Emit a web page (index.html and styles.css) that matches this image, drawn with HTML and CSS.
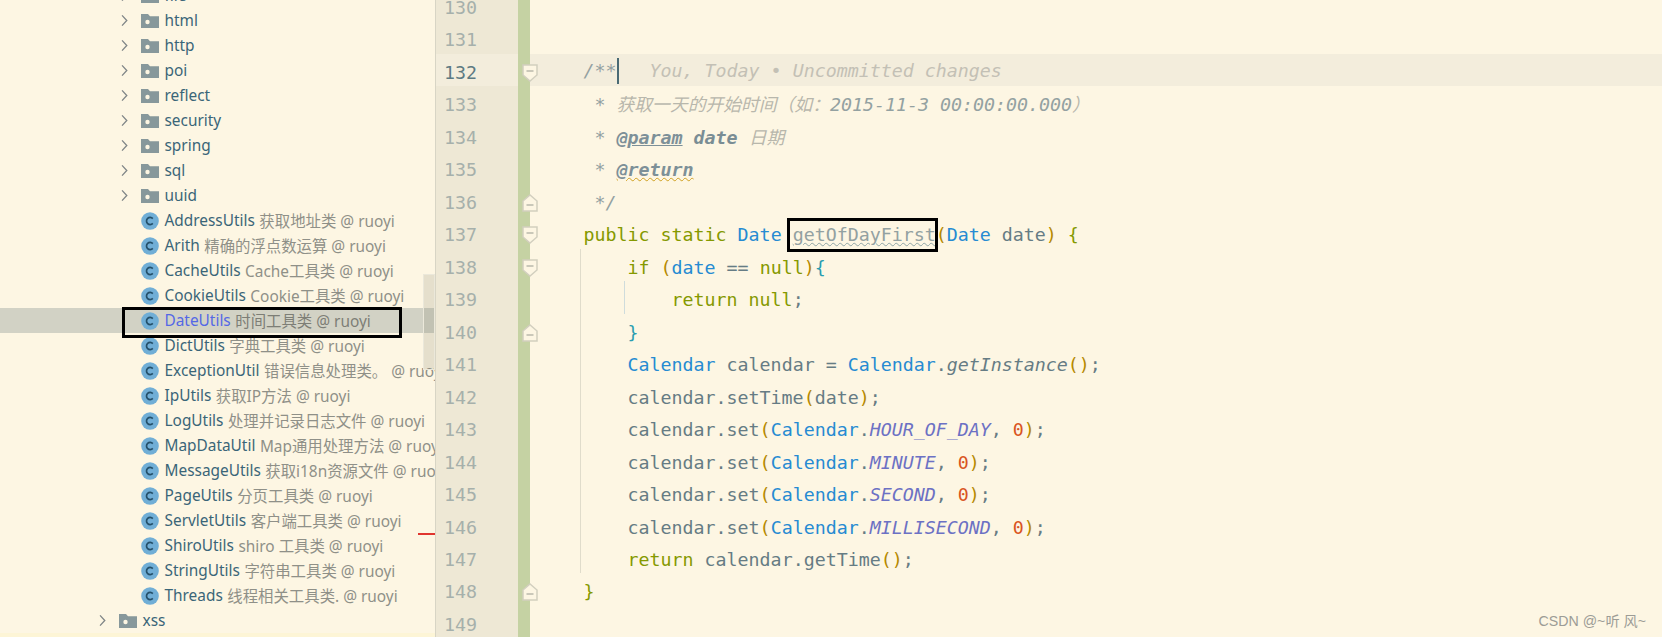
FILE: index.html
```html
<!DOCTYPE html>
<html lang="zh">
<head>
<meta charset="utf-8">
<title>DateUtils</title>
<link rel="stylesheet" href="styles.css">
</head>
<body>
<svg class="defs" width="0" height="0" aria-hidden="true">
  <defs>
    <symbol id="chev" viewBox="0 0 8 14"><path d="M1.2 1.2 L6.6 7 L1.2 12.8" fill="none" stroke="#7f8587" stroke-width="1.5"/></symbol>
    <symbol id="folder" viewBox="0 0 18 14"><path d="M0 0 H7 L9 2.2 H18 V14 H0 Z" fill="#87989b"/><circle cx="6.5" cy="8" r="2.2" fill="#fdf6e3"/></symbol>
    <symbol id="cls" viewBox="0 0 18 18"><circle cx="9" cy="9" r="8.8" fill="#70aed6"/><path d="M11.8 6.6 A3.6 3.6 0 1 0 11.8 11.4" fill="none" stroke="#24506a" stroke-width="1.7"/></symbol>
    <symbol id="fold-open" viewBox="0 0 16 18"><path d="M1 1 H15 V11 L8 17 L1 11 Z" fill="#fdf6e3" stroke="#d2cfbf" stroke-width="1.5"/><path d="M4.5 7 H11.5" stroke="#a9aa9d" stroke-width="1.2"/></symbol>
    <symbol id="fold-close" viewBox="0 0 16 18"><path d="M1 17 H15 V7 L8 1 L1 7 Z" fill="#fdf6e3" stroke="#d2cfbf" stroke-width="1.5"/><path d="M4.5 11 H11.5" stroke="#a9aa9d" stroke-width="1.2"/></symbol>
  </defs>
</svg>
<div class="app">
  <aside class="panel">
    <div class="tree">
      <div class="row d1"><svg class="chev"><use href="#chev"/></svg><svg class="folder"><use href="#folder"/></svg><span class="name">file</span></div>
      <div class="row d1"><svg class="chev"><use href="#chev"/></svg><svg class="folder"><use href="#folder"/></svg><span class="name">html</span></div>
      <div class="row d1"><svg class="chev"><use href="#chev"/></svg><svg class="folder"><use href="#folder"/></svg><span class="name">http</span></div>
      <div class="row d1"><svg class="chev"><use href="#chev"/></svg><svg class="folder"><use href="#folder"/></svg><span class="name">poi</span></div>
      <div class="row d1"><svg class="chev"><use href="#chev"/></svg><svg class="folder"><use href="#folder"/></svg><span class="name">reflect</span></div>
      <div class="row d1"><svg class="chev"><use href="#chev"/></svg><svg class="folder"><use href="#folder"/></svg><span class="name">security</span></div>
      <div class="row d1"><svg class="chev"><use href="#chev"/></svg><svg class="folder"><use href="#folder"/></svg><span class="name">spring</span></div>
      <div class="row d1"><svg class="chev"><use href="#chev"/></svg><svg class="folder"><use href="#folder"/></svg><span class="name">sql</span></div>
      <div class="row d1"><svg class="chev"><use href="#chev"/></svg><svg class="folder"><use href="#folder"/></svg><span class="name">uuid</span></div>
      <div class="row d1 leaf"><svg class="cls"><use href="#cls"/></svg><span class="name">AddressUtils</span><span class="note">获取地址类 @ ruoyi</span></div>
      <div class="row d1 leaf"><svg class="cls"><use href="#cls"/></svg><span class="name">Arith</span><span class="note">精确的浮点数运算 @ ruoyi</span></div>
      <div class="row d1 leaf"><svg class="cls"><use href="#cls"/></svg><span class="name">CacheUtils</span><span class="note">Cache工具类 @ ruoyi</span></div>
      <div class="row d1 leaf"><svg class="cls"><use href="#cls"/></svg><span class="name">CookieUtils</span><span class="note">Cookie工具类 @ ruoyi</span></div>
      <div class="row d1 leaf selected"><svg class="cls"><use href="#cls"/></svg><span class="name">DateUtils</span><span class="note">时间工具类 @ ruoyi</span><span class="mark-box"></span></div>
      <div class="row d1 leaf"><svg class="cls"><use href="#cls"/></svg><span class="name">DictUtils</span><span class="note">字典工具类 @ ruoyi</span></div>
      <div class="row d1 leaf"><svg class="cls"><use href="#cls"/></svg><span class="name">ExceptionUtil</span><span class="note">错误信息处理类。 @ ruoyi</span></div>
      <div class="row d1 leaf"><svg class="cls"><use href="#cls"/></svg><span class="name">IpUtils</span><span class="note">获取IP方法 @ ruoyi</span></div>
      <div class="row d1 leaf"><svg class="cls"><use href="#cls"/></svg><span class="name">LogUtils</span><span class="note">处理并记录日志文件 @ ruoyi</span></div>
      <div class="row d1 leaf"><svg class="cls"><use href="#cls"/></svg><span class="name">MapDataUtil</span><span class="note">Map通用处理方法 @ ruoyi</span></div>
      <div class="row d1 leaf"><svg class="cls"><use href="#cls"/></svg><span class="name">MessageUtils</span><span class="note">获取i18n资源文件 @ ruoyi</span></div>
      <div class="row d1 leaf"><svg class="cls"><use href="#cls"/></svg><span class="name">PageUtils</span><span class="note">分页工具类 @ ruoyi</span></div>
      <div class="row d1 leaf"><svg class="cls"><use href="#cls"/></svg><span class="name">ServletUtils</span><span class="note">客户端工具类 @ ruoyi</span></div>
      <div class="row d1 leaf"><svg class="cls"><use href="#cls"/></svg><span class="name">ShiroUtils</span><span class="note">shiro 工具类 @ ruoyi</span></div>
      <div class="row d1 leaf"><svg class="cls"><use href="#cls"/></svg><span class="name">StringUtils</span><span class="note">字符串工具类 @ ruoyi</span></div>
      <div class="row d1 leaf"><svg class="cls"><use href="#cls"/></svg><span class="name">Threads</span><span class="note">线程相关工具类. @ ruoyi</span></div>
      <div class="row d0"><svg class="chev"><use href="#chev"/></svg><svg class="folder"><use href="#folder"/></svg><span class="name">xss</span></div>
      <div class="row tail"></div>
    </div>
    <div class="scrollbar"></div>
    <div class="error-mark"></div>
  </aside>
  <main class="editor">
    <div class="line"><span class="num">130</span><span class="strip"></span><span class="code"></span></div>
    <div class="line"><span class="num">131</span><span class="strip"></span><span class="code"></span></div>
    <div class="line current"><span class="num">132</span><span class="strip"><svg class="fold"><use href="#fold-open"/></svg></span><span class="code"><span class="c">/**</span><span class="caret"></span><span class="hint">   You, Today • Uncommitted changes</span></span></div>
    <div class="line"><span class="num">133</span><span class="strip"></span><span class="code"><span class="c"> * <span class="zh">获取一天的开始时间（如：</span>2015-11-3 00:00:00.000<span class="zh">）</span></span></span></div>
    <div class="line"><span class="num">134</span><span class="strip"></span><span class="code"><span class="c"> * <span class="tag">@param</span> <span class="pname">date</span> <span class="zh">日期</span></span></span></div>
    <div class="line"><span class="num">135</span><span class="strip"></span><span class="code"><span class="c"> * <span class="tag warn">@return</span></span></span></div>
    <div class="line"><span class="num">136</span><span class="strip"><svg class="fold"><use href="#fold-close"/></svg></span><span class="code"><span class="c"> */</span></span></div>
    <div class="line"><span class="num">137</span><span class="strip"><svg class="fold"><use href="#fold-open"/></svg></span><span class="code"><span class="k">public static</span> <span class="t">Date</span> <span class="boxed"><span class="unused">getOfDayFirst</span></span><span class="p">(</span><span class="t">Date</span> date<span class="p">)</span> <span class="k">{</span></span></div>
    <div class="line guide1"><span class="num">138</span><span class="strip"><svg class="fold"><use href="#fold-open"/></svg></span><span class="code">    <span class="k">if</span> <span class="p">(</span><span class="t">date</span> == <span class="k">null</span><span class="p">)</span><span class="b">{</span></span></div>
    <div class="line guide1 guide2"><span class="num">139</span><span class="strip"></span><span class="code">        <span class="k">return null</span>;</span></div>
    <div class="line guide1"><span class="num">140</span><span class="strip"><svg class="fold"><use href="#fold-close"/></svg></span><span class="code">    <span class="b">}</span></span></div>
    <div class="line guide1"><span class="num">141</span><span class="strip"></span><span class="code">    <span class="t">Calendar</span> calendar = <span class="t">Calendar</span>.<i>getInstance</i><span class="p">()</span>;</span></div>
    <div class="line guide1"><span class="num">142</span><span class="strip"></span><span class="code">    calendar.setTime<span class="p">(</span>date<span class="p">)</span>;</span></div>
    <div class="line guide1"><span class="num">143</span><span class="strip"></span><span class="code">    calendar.set<span class="p">(</span><span class="t">Calendar</span>.<i class="const">HOUR_OF_DAY</i>, <span class="n">0</span><span class="p">)</span>;</span></div>
    <div class="line guide1"><span class="num">144</span><span class="strip"></span><span class="code">    calendar.set<span class="p">(</span><span class="t">Calendar</span>.<i class="const">MINUTE</i>, <span class="n">0</span><span class="p">)</span>;</span></div>
    <div class="line guide1"><span class="num">145</span><span class="strip"></span><span class="code">    calendar.set<span class="p">(</span><span class="t">Calendar</span>.<i class="const">SECOND</i>, <span class="n">0</span><span class="p">)</span>;</span></div>
    <div class="line guide1"><span class="num">146</span><span class="strip"></span><span class="code">    calendar.set<span class="p">(</span><span class="t">Calendar</span>.<i class="const">MILLISECOND</i>, <span class="n">0</span><span class="p">)</span>;</span></div>
    <div class="line guide1"><span class="num">147</span><span class="strip"></span><span class="code">    <span class="k">return</span> calendar.getTime<span class="p">()</span>;</span></div>
    <div class="line"><span class="num">148</span><span class="strip"><svg class="fold"><use href="#fold-close"/></svg></span><span class="code"><span class="k">}</span></span></div>
    <div class="line"><span class="num">149</span><span class="strip"></span><span class="code"></span></div>
    <div class="watermark">CSDN @~听 风~</div>
  </main>
</div>
</body>
</html>
```

FILE: styles.css
```css
html, body {
  margin: 0;
  height: 100%;
  overflow: hidden;
  background: #fdf6e3;
}

.defs {
  position: absolute;
}

.app {
  display: flex;
  height: 637px;
  overflow: hidden;
}

/* project tree */
.panel {
  position: relative;
  flex: 0 0 435px;
  height: 637px;
  overflow: hidden;
  border-right: 1px solid #d8d5c5;
  font-family: "Noto Sans", "Noto Sans CJK SC", sans-serif;
  font-size: 15.4px;
  color: #3a6578;
}

.tree {
  margin-top: -17px;
}

.row {
  position: relative;
  display: flex;
  align-items: center;
  height: 25px;
  white-space: nowrap;
}

.name,
.note {
  margin-top: 1px;
  margin-bottom: 1px;
}

.d1 { padding-left: 121px; }
.d0 { padding-left: 99px; }
.leaf { padding-left: 141px; }

.chev {
  flex: none;
  width: 7px;
  height: 13px;
  margin-right: 13px;
}

.folder {
  flex: none;
  width: 18px;
  height: 14px;
  margin-right: 5.5px;
}

.cls {
  flex: none;
  width: 18px;
  height: 18px;
  margin-right: 5.5px;
}

.note {
  margin-left: 4.5px;
  color: #8f9088;
}

.selected {
  background: #d2d2c5;
}

.selected .name {
  color: #5468e6;
}

.selected .note {
  color: #7d7e76;
}

.mark-box {
  position: absolute;
  left: 122px;
  top: -1px;
  width: 280px;
  height: 31px;
  box-sizing: border-box;
  border: 3px solid #000;
  z-index: 2;
}

.tail {
  background: #fdf5d6;
}

.scrollbar {
  position: absolute;
  left: 423px;
  top: 274px;
  width: 12px;
  height: 96px;
  box-sizing: border-box;
  border: 1px solid #ebe8da;
  background: rgba(120, 120, 100, 0.18);
  z-index: 3;
}

.error-mark {
  position: absolute;
  left: 418px;
  top: 533px;
  width: 17px;
  height: 2px;
  background: #e0352f;
}

/* editor */
.editor {
  position: relative;
  flex: 1;
  min-width: 0;
  height: 637px;
  margin-top: -11px;
  font-family: "DejaVu Sans Mono", "Noto Sans CJK SC", monospace;
  font-size: 18.3px;
  color: #667c84;
}

.line {
  position: relative;
  display: flex;
  height: 32.47px;
  line-height: 35.5px;
  white-space: pre;
}

.num {
  flex: 0 0 74px;
  padding: 1px 0 0 8px;
  background: #eee8d5;
  color: #a6b0ab;
}

.strip {
  position: relative;
  flex: 0 0 12px;
  background: #c5d2a3;
}

.code {
  flex: 1;
  padding: 1px 0 0 53.5px;
  min-width: 0;
}

.current .num {
  background: #f3eddc;
  color: #5d7a82;
}

.current .code {
  padding-top: 0;
  line-height: 34px;
  background: #f3eddc;
}

.fold {
  position: absolute;
  left: 4px;
  top: 10px;
  width: 16px;
  height: 18px;
}

.guide1::before,
.guide2::after {
  content: "";
  position: absolute;
  top: 0;
  bottom: 0;
  width: 1px;
}

.guide1::before {
  left: 143.5px;
  background: #e0dccb;
}

.guide2::after {
  left: 187.5px;
  background: #cfdcdc;
}

.c { color: #93a1a1; font-style: italic; }
.zh { color: #b8b7ac; font-size: 17.8px; }
.tag { color: #7d9098; font-weight: bold; text-decoration: underline; }
.warn { text-decoration: underline wavy #cfa020 1px; }
.pname { color: #7a8d94; font-weight: bold; }
.hint { color: #c3c0b5; font-style: italic; }
.k { color: #859900; }
.t { color: #268bd2; }
.b { color: #2a9db0; }
.p { color: #b58900; }
.n { color: #d9541e; }
.const { color: #6c71c4; }

.caret {
  display: inline-block;
  width: 2px;
  height: 26px;
  margin-right: -2px;
  vertical-align: -7px;
  background: #4a6a74;
}

.boxed {
  position: relative;
  display: inline-block;
}

.boxed::after {
  content: "";
  position: absolute;
  left: -6px;
  right: -2.5px;
  top: 1px;
  height: 34px;
  box-sizing: border-box;
  border: 3px solid #000;
}

.unused {
  color: #93a1a1;
  text-decoration: underline wavy #8fa5a5 1px;
}

.watermark {
  position: absolute;
  right: 16px;
  bottom: -4px;
  font-family: "Liberation Sans", "Noto Sans CJK SC", sans-serif;
  font-size: 14.2px;
  color: #9c9c96;
}
```
